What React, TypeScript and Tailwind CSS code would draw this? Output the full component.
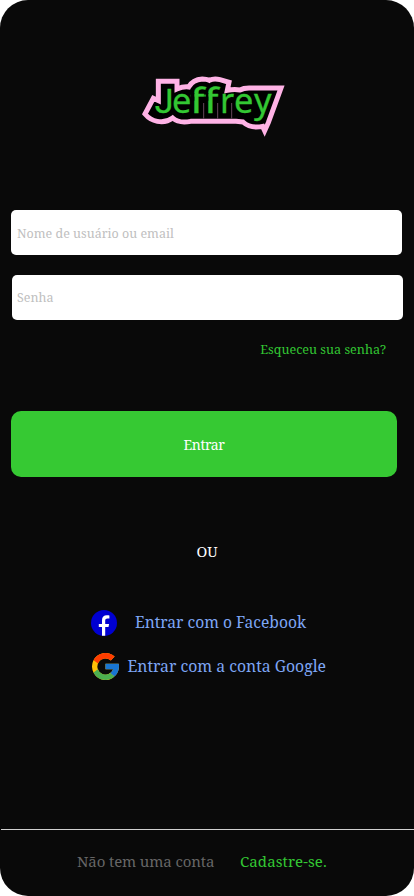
function Logo() {
  return (
    <svg className="ml-[134px] block h-[76px] w-[160px]" viewBox="0 0 480 228" role="img" aria-label="Jeffrey">
      <path
        d="M33 138 L58 91 L73 98 V40 H129 V63 Q148 55 164 57 Q176 35 205 33 Q218 33 226 37 Q240 30 258 35 L285 43 L280 67 Q300 63 318 66 Q330 59 350 60 H441 L403 164 L392 188 L386 175 Q350 183 327 162 L306 160 H170 Q135 167 116 150 Q96 165 70 160 Q48 156 33 138 Z"
        fill="#000"
        stroke="#ffb3e6"
        strokeWidth="15"
        strokeMiterlimit="6"
      />
      <path d="M209 105V152M251 105V152M293 105V152" stroke="#65475b" strokeWidth="3" />
      <g fill="#33c733" stroke="#33c733" strokeWidth="1">
        <text x="62" y="136" fontSize="102" className="font-['Roboto',sans-serif]">
          J
        </text>
        <g fontSize="103" className="font-['Noto_Sans',sans-serif]">
          <text x="114" y="136">e</text>
          <text transform="translate(168 136) scale(1.22 1)">f</text>
          <text transform="translate(210 136) scale(1.22 1)">f</text>
          <text x="258 300 360" y="136">
            rey
          </text>
        </g>
      </g>
      <path d="M169 76H181V98H169ZM215 76H223V98H215Z" fill="#000" />
    </svg>
  );
}

function FacebookIcon() {
  return (
    <svg className="size-[26px] shrink-0" viewBox="0 0 26 26" aria-hidden="true">
      <circle cx="13" cy="13" r="13" fill="#0000d1" />
      <path d="M11 25.8V16.9H7.8V13.9H11V10.2C11 7 12.9 5.3 15.8 5.3C17 5.3 18.4 5.5 18.4 5.5V8.4H16.6C15 8.4 14.2 9.3 14.2 10.5V13.9H18.1L17.5 16.9H14.2V25.8Z" fill="#fff" />
    </svg>
  );
}

function GoogleIcon() {
  return (
    <svg className="h-[27px] w-[27px] shrink-0" viewBox="4 4 40 40" aria-hidden="true">
      <path fill="#ffc107" d="M43.6 20H24v8h11.3A12 12 0 1 1 31.9 15l5.7-5.7A20 20 0 1 0 43.6 20Z" />
      <path fill="#ff3d00" d="m6.3 14.7 6.6 4.8A12 12 0 0 1 31.9 15l5.7-5.7A20 20 0 0 0 6.3 14.7Z" />
      <path fill="#4caf50" d="M24 44c5.2 0 9.9-2 13.4-5.2l-6.2-5.2A12 12 0 0 1 12.7 28l-6.5 5A20 20 0 0 0 24 44Z" />
      <path fill="#1976d2" d="M43.6 20H24v8h11.3a12 12 0 0 1-4.1 5.6l6.2 5.2C37 39.2 44 34 44 24c0-1.3-.1-2.7-.4-4Z" />
    </svg>
  );
}

export default function App() {
  return (
    <div className="h-[896px] w-[414px] overflow-hidden bg-white">
      <main className="flex h-full flex-col rounded-[28px] bg-[#090909] pt-[68px] font-['Noto_Serif','DejaVu_Serif',serif]">
        <Logo />
        <form className="mt-[66px] flex flex-col">
          <input
            placeholder="Nome de usuário ou email"
            className="ml-[11px] h-[45px] w-[391px] rounded-[5px] bg-white px-[6px] pt-[2px] text-[12.5px] placeholder:text-[#c0c0c0]"
          />
          <input
            placeholder="Senha"
            className="mt-5 ml-3 h-[45px] w-[391px] rounded-[5px] bg-white px-[5px] text-[12.5px] placeholder:text-[#c0c0c0]"
          />
          <a className="mt-5 mr-[28px] self-end text-[12.6px] leading-5 whitespace-nowrap text-[#33c733]">Esqueceu sua senha?</a>
          <button type="button" className="mt-[51px] ml-[11px] h-[66px] w-[386px] rounded-[10px] bg-[#36c933] text-[14px] tracking-[-0.4px] text-white">
            Entrar
          </button>
        </form>
        <p className="mt-16 text-center text-[14.5px] leading-5 text-white">OU</p>
        <div className="mt-[49px] flex flex-col gap-[17px] text-[#7ea6f5]">
          <a className="ml-[91px] flex h-[26px] items-center gap-[18px] text-[15.6px] leading-5 whitespace-nowrap">
            <FacebookIcon />
            <span className="pb-[2px]">Entrar com o Facebook</span>
          </a>
          <a className="ml-[91.5px] flex h-[27px] items-center gap-[9px] text-[15.75px] leading-5 whitespace-nowrap">
            <GoogleIcon />
            <span className="pb-px">Entrar com a conta Google</span>
          </a>
        </div>
        <footer className="mt-auto ml-px flex h-[67px] border-t border-[#d0d0d0] pt-[21px] pl-[76px] text-[15px] leading-5 whitespace-nowrap">
          <span className="w-[163px] tracking-[-0.12px] text-[#666]">Não tem uma conta</span>
          <a className="tracking-[0.1px] text-[#33c733]">Cadastre-se.</a>
        </footer>
      </main>
    </div>
  );
}
